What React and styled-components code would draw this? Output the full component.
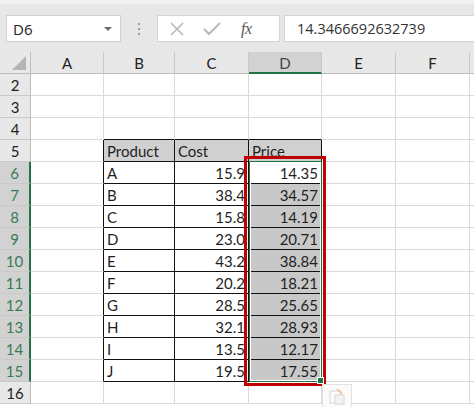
import React from "react";
import styled, { createGlobalStyle, css } from "styled-components";

const GlobalStyle = createGlobalStyle`
  html, body {
    margin: 0;
    padding: 0;
    background: #ffffff;
    overflow: hidden;
  }
  body {
    font-family: "Lato", "Liberation Sans", sans-serif;
  }
`;

const COLS = ["A", "B", "C", "D", "E", "F", ""];
const COL_WIDTHS = "31px 73px 71px 74px 73px 74px 74px 74px";
const ROWS = [2, 3, 4, 5, 6, 7, 8, 9, 10, 11, 12, 13, 14, 15, 16];

const DATA = [
  ["A", "15.9", "14.35"],
  ["B", "38.4", "34.57"],
  ["C", "15.8", "14.19"],
  ["D", "23.0", "20.71"],
  ["E", "43.2", "38.84"],
  ["F", "20.2", "18.21"],
  ["G", "28.5", "25.65"],
  ["H", "32.1", "28.93"],
  ["I", "13.5", "12.17"],
  ["J", "19.5", "17.55"],
];

const Page = styled.div`
  width: 474px;
  height: 407px;
  overflow: hidden;
  background: #ffffff;
`;

const TopBar = styled.div`
  height: 52px;
  box-sizing: border-box;
  background: #e7e7e7;
  border-top: 4px solid #f1f1f1;
  padding: 11px 0 0 6px;
`;

const FormulaRow = styled.div`
  display: flex;
  align-items: stretch;
  height: 27px;
`;

const NameBox = styled.div`
  width: 115px;
  box-sizing: border-box;
  background: #fff;
  border: 1px solid #cfcfcf;
  display: flex;
  align-items: center;
  justify-content: space-between;
  padding: 0 8px 0 6px;
  font-family: "Open Sans", "Noto Sans", sans-serif;
  font-size: 15px;
  color: #222;
`;

const DropArrow = styled.span`
  width: 0;
  height: 0;
  border-left: 4px solid transparent;
  border-right: 4px solid transparent;
  border-top: 4px solid #6b6b6b;
`;

const Grip = styled.div`
  width: 36px;
  display: flex;
  flex-direction: column;
  align-items: center;
  justify-content: center;
  gap: 3px;

  span {
    width: 2px;
    height: 2px;
    background: #9d9d9d;
  }
`;

const IconBox = styled.div`
  width: 123px;
  box-sizing: border-box;
  background: #fff;
  border: 1px solid #d4d4d4;
  display: flex;
  align-items: center;
  padding: 0 0 0 12px;
  gap: 19px;
`;

const Fx = styled.span`
  font-family: "Liberation Serif", serif;
  font-style: italic;
  font-size: 16px;
  color: #555;
  letter-spacing: -0.5px;
  margin-left: 1px;
`;

const FormulaInput = styled.div`
  flex: 1;
  margin-left: 4px;
  box-sizing: border-box;
  background: #fff;
  border: 1px solid #d4d4d4;
  border-right: none;
  display: flex;
  align-items: center;
  padding-left: 12px;
  font-family: "Open Sans", "Noto Sans", sans-serif;
  font-size: 14.5px;
  color: #333;
`;

const Sheet = styled.div`
  position: relative;
  display: grid;
  grid-template-columns: ${COL_WIDTHS};
  grid-auto-rows: 22px;
  font-size: 15px;
  color: #1f1f1f;
`;

const Corner = styled.div`
  box-sizing: border-box;
  background: #e8e8e8;
  border-right: 1px solid #bdbdbd;
  border-bottom: 1px solid #bdbdbd;
  position: relative;

  &::after {
    content: "";
    position: absolute;
    right: 4px;
    bottom: 3px;
    width: 0;
    height: 0;
    border-left: 14px solid transparent;
    border-bottom: 14px solid #b4b4b4;
  }
`;

const ColHead = styled.div`
  box-sizing: border-box;
  display: flex;
  align-items: center;
  justify-content: center;
  background: ${({ $active }) => ($active ? "#d2d2d2" : "#e8e8e8")};
  border-right: 1px solid #c9c9c9;
  border-bottom: ${({ $active }) =>
    $active ? "2px solid #217346" : "1px solid #bdbdbd"};
  color: ${({ $active }) => ($active ? "#444" : "#222")};
  padding-top: ${({ $active }) => ($active ? "1px" : "0")};
`;

const RowHead = styled.div`
  box-sizing: border-box;
  display: flex;
  align-items: center;
  justify-content: center;
  background: ${({ $active }) => ($active ? "#d2d2d2" : "#e8e8e8")};
  border-bottom: 1px solid #c9c9c9;
  border-right: ${({ $active }) =>
    $active ? "2px solid #217346" : "1px solid #bdbdbd"};
  color: ${({ $active }) => ($active ? "#3c7a55" : "#222")};
`;

const Cell = styled.div`
  box-sizing: border-box;
  display: flex;
  align-items: center;
  padding: 0 3px;
  white-space: nowrap;
  overflow: hidden;
  border-right: 1px solid ${({ $br }) => ($br ? "#111" : "#dadada")};
  border-bottom: 1px solid ${({ $bb }) => ($bb ? "#111" : "#dadada")};
  background: ${({ $bg }) => $bg || "#fff"};
  ${({ $num }) =>
    $num &&
    css`
      justify-content: flex-end;
    `}
`;

const RedFrame = styled.div`
  position: absolute;
  left: 244px;
  top: 104px;
  width: 82px;
  height: 230px;
  box-sizing: border-box;
  border: 3px solid #c00000;
  pointer-events: none;
`;

const Selection = styled.div`
  position: absolute;
  left: 249px;
  top: 109px;
  width: 73px;
  height: 221px;
  box-sizing: border-box;
  border: 1px solid #217346;
  box-shadow: inset 0 0 0 1px #ffffff;
`;

const FillHandle = styled.div`
  position: absolute;
  right: -3px;
  bottom: -3px;
  width: 5px;
  height: 5px;
  background: #217346;
  border: 1px solid #fff;
`;

const PasteTag = styled.div`
  position: absolute;
  left: 322px;
  top: 332px;
  width: 30px;
  height: 24px;
  box-sizing: border-box;
  border: 1px solid #e2e2e2;
  background: #fbfbfb;
  display: flex;
  align-items: center;
  justify-content: center;
`;

function cellProps(row, colIdx) {
  // colIdx: 0 = A, 1 = B ...
  const inTableRow = row >= 5 && row <= 15;
  const inTableCol = colIdx >= 1 && colIdx <= 3;
  const props = {};
  if (inTableRow && (inTableCol || colIdx === 0)) props.$br = true;
  if (inTableCol && row >= 4 && row <= 15) props.$bb = true;
  if (row === 5 && inTableCol) props.$bg = "#d0d0d0";
  if (colIdx === 3 && row >= 7 && row <= 15) props.$bg = "#c8c8c8";
  return props;
}

function cellText(row, colIdx) {
  if (row === 5 && colIdx >= 1 && colIdx <= 3) {
    return ["Product", "Cost", "Price"][colIdx - 1];
  }
  if (row >= 6 && row <= 15 && colIdx >= 1 && colIdx <= 3) {
    return DATA[row - 6][colIdx - 1];
  }
  return null;
}

export default function App() {
  return (
    <Page>
      <GlobalStyle />
      <TopBar>
        <FormulaRow>
          <NameBox>
            D6
            <DropArrow />
          </NameBox>
          <Grip>
            <span />
            <span />
            <span />
          </Grip>
          <IconBox>
            <svg width="14" height="14" viewBox="0 0 14 14">
              <path
                d="M1 1 L13 13 M13 1 L1 13"
                stroke="#b8b8b8"
                strokeWidth="1.6"
                fill="none"
              />
            </svg>
            <svg width="18" height="14" viewBox="0 0 18 14">
              <path
                d="M1 7 L6 12 L17 1"
                stroke="#b8b8b8"
                strokeWidth="2"
                fill="none"
              />
            </svg>
            <Fx>fx</Fx>
          </IconBox>
          <FormulaInput>14.3466692632739</FormulaInput>
        </FormulaRow>
      </TopBar>

      <Sheet>
        <Corner />
        {COLS.map((c, i) => (
          <ColHead key={i} $active={c === "D"}>
            {c}
          </ColHead>
        ))}
        {ROWS.map((row) => (
          <React.Fragment key={row}>
            <RowHead $active={row >= 6 && row <= 15}>{row}</RowHead>
            {COLS.map((c, i) => (
              <Cell
                key={i}
                {...cellProps(row, i)}
                $num={row > 5 && (i === 2 || i === 3)}
              >
                {cellText(row, i)}
              </Cell>
            ))}
          </React.Fragment>
        ))}

        <RedFrame />
        <Selection>
          <FillHandle />
        </Selection>
        <PasteTag>
          <svg width="18" height="18" viewBox="0 0 18 18">
            <rect x="2" y="4" width="11" height="12" fill="none" stroke="#dcdcdc" strokeWidth="1.2" />
            <rect x="7" y="8" width="9" height="9" fill="#f3f3f3" stroke="#dcdcdc" strokeWidth="1.2" />
            <path d="M9 2 L14 7" stroke="#f3c9a8" strokeWidth="2" />
          </svg>
        </PasteTag>
      </Sheet>
    </Page>
  );
}
